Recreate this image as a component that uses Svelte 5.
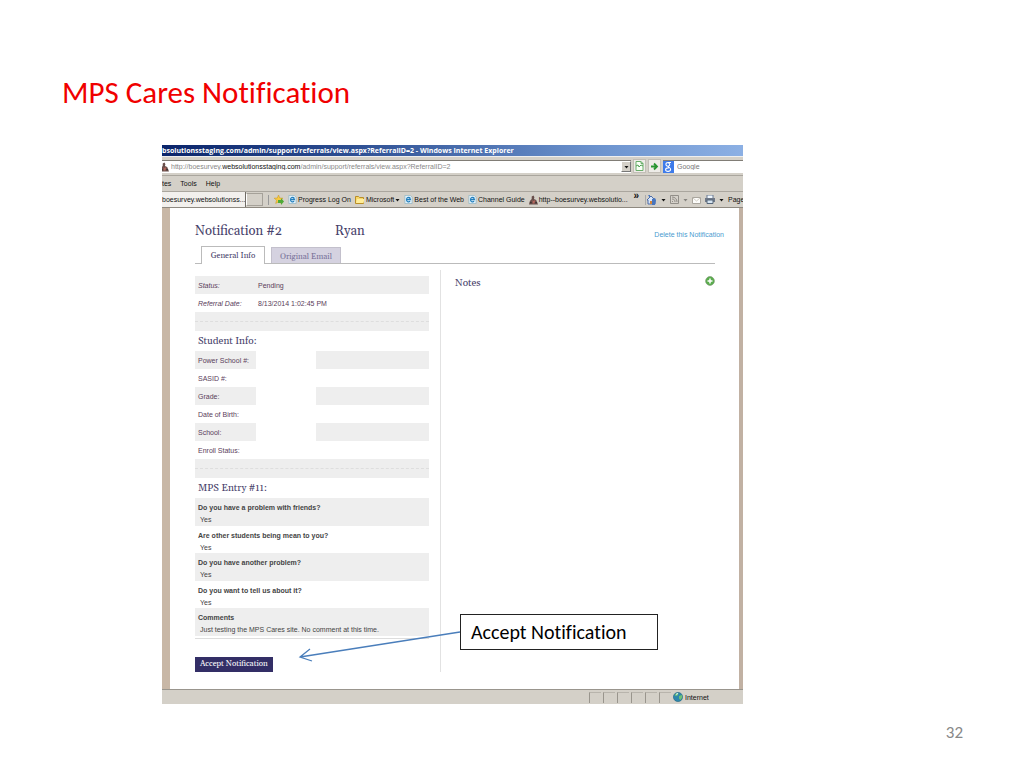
<script>
  const details = [
    ['Status:', 'Pending'],
    ['Referral Date:', '8/13/2014 1:02:45 PM']
  ];
  const student = ['Power School #:', 'SASID #:', 'Grade:', 'Date of Birth:', 'School:', 'Enroll Status:'];
  const answers = [
    ['Do you have a problem with friends?', 'Yes'],
    ['Are other students being mean to you?', 'Yes'],
    ['Do you have another problem?', 'Yes'],
    ['Do you want to tell us about it?', 'Yes'],
    ['Comments', 'Just testing the MPS Cares site. No comment at this time.']
  ];
  const panes = [1, 2, 3, 4, 5, 6];
</script>

{#snippet page()}
  <svg width="9" height="9" viewBox="0 0 10 10" aria-hidden="true"><path d="M1 .5h6l2 2v7H1z" fill="#e2f2fb" stroke="#86aebd" stroke-width=".7" /><path d="M7 3.1C5 1.8 2.8 3 2.8 5.2S5 8.4 6.8 7M3 5.2h4.2C7.2 3.9 6.2 3.3 5 3.3" fill="none" stroke="#247fbd" stroke-width="1.3" /></svg>
{/snippet}

{#snippet figure()}
  <svg width="9" height="10" viewBox="0 0 10 10" aria-hidden="true"><path d="M3 1l2-1 1 2-.5 2L8 5l2 5H0l1-4 2-2z" fill="#684e4a" /><path d="M4 5l1 1 2-1-1 4H4z" fill="#b5665d" /><path d="M1 8h2M7 8h2" stroke="#302828" /></svg>
{/snippet}

{#snippet caret()}
  <svg class="caret" width="5" height="4" viewBox="0 0 5 4" aria-hidden="true"><path d="M.5 1h4L2.5 3.4z" fill="#111" /></svg>
{/snippet}

<main>
  <h1>MPS Cares Notification</h1>
  <div class="stage">
    <div class="window">
      <div class="title">bsolutionsstaging.com/admin/support/referrals/view.aspx?ReferralID=2 - Windows Internet Explorer</div>
      <div class="address">
        <div class="url">
          {@render figure()}
          <span>http://boesurvey.<b>websolutionsstaging.com</b>/admin/support/referrals/view.aspx?ReferralID=2</span>
          <button class="drop" aria-label="Show addresses">{@render caret()}</button>
        </div>
        <button class="tool" aria-label="Compatibility view"><svg width="9" height="10" viewBox="0 0 9 10"><path d="M1 .5h5l2 2v7H1zM6 .5v2h2" fill="#f7fff4" stroke="#69ae6a" /><path d="M1 5l2-1 1 2 2-2 2 1" fill="none" stroke="#55a158" /></svg></button>
        <button class="tool" aria-label="Go"><svg width="9" height="9" viewBox="0 0 9 9"><path d="M1 4.5h5M4 1.5l3 3-3 3" fill="none" stroke="#299532" stroke-width="1.8" /></svg></button>
        <div class="search">
          <svg width="11" height="12" viewBox="0 0 11 12" aria-hidden="true"><path d="M0 0h11v12H0z" fill="#3e7bea" /><path d="M8 1.5H5.2c-3 0-3 3.7-.2 3.7 2.4 0 2.2-3.2.2-3.2M5.3 5.2c-.8 1 2.5 1.4 2.3 3.3-.2 2.5-5 2.4-5 .2 0-1.7 2-1.8 3.2-1.8" fill="none" stroke="#fff" stroke-width="1.1" /></svg>
          <input aria-label="Search" placeholder="Google" />
        </div>
      </div>
      <nav class="menu"><span>tes</span><span>Tools</span><span>Help</span></nav>
      <div class="links">
        <button class="page-tab">boesurvey.websolutionss...</button>
        <button class="new-tab" aria-label="New tab"></button>
        <div class="favorites">
          <svg width="10" height="10" viewBox="0 0 10 10" aria-hidden="true"><path d="M4.5 0l1.3 3 3.2.2-2.4 2 .8 3.3-2.9-1.7L1.7 8.5l.8-3.3-2.4-2L3.3 3z" fill="#f7ca40" stroke="#c8961d" stroke-width=".5" /><path d="M4 5h3V3l3 3.5L7 10V8H4z" fill="#4faa37" /></svg>
          <span class="fav">{@render page()}Progress Log On</span>
          <span class="fav"><svg width="10" height="9" viewBox="0 0 10 9" aria-hidden="true"><path d="M.5 1.5h3l1 1h4v6h-8z" fill="#f6d66a" stroke="#b98e27" /><path d="M1 8l1-4h7.5l-1 4z" fill="#ffed98" /></svg>Microsoft {@render caret()}</span>
          <span class="fav">{@render page()}Best of the Web</span>
          <span class="fav">{@render page()}Channel Guide</span>
          <span class="fav">{@render figure()}http--boesurvey.websolutio...</span>
        </div>
        <span class="more">»</span>
        <div class="commands">
          <svg width="10" height="10" viewBox="0 0 10 10" aria-hidden="true"><path d="M0 5l4-4 4 4v4H1V5z" fill="#d9e6fa" stroke="#4d6da8" /><path d="M1 0h2v3M5 4l3-1 1 2-1 5H5z" fill="#4875bd" /><path d="M3 6h2v3H3z" fill="#d58637" /></svg>
          {@render caret()}
          <svg width="9" height="9" viewBox="0 0 9 9" aria-hidden="true"><path d="M.5.5h8v8h-8z" fill="#d6d2cb" stroke="#928f89" /><path d="M2 4c2 0 3 1 3 3M2 2c3 0 5 2 5 5M2 6.5h1" fill="none" stroke="#908c86" /></svg>
          <span class="faint">{@render caret()}</span>
          <svg width="9" height="8" viewBox="0 0 9 8" aria-hidden="true"><path d="M.5 1.5h8v6h-8z" fill="#fcfcfa" stroke="#aaa69e" /><path d="M1 2l3.5 3L8 2" fill="none" stroke="#d3cec5" /></svg>
          <svg width="10" height="9" viewBox="0 0 10 9" aria-hidden="true"><path d="M2 0h6v4H2z" fill="#eff7ff" stroke="#6a7b92" /><path d="M0 3h10v4H0z" fill="#6f7887" /><path d="M2 5h6v3.5H2z" fill="#d7e6f4" stroke="#566679" /></svg>
          {@render caret()}
          <span>Page</span>
        </div>
      </div>

      <div class="sheet">
        <header>
          <h2>Notification #2</h2>
          <h2>Ryan</h2>
          <a href="#delete">Delete this Notification</a>
        </header>
        <div class="tabs">
          <button class="active">General Info</button>
          <button>Original Email</button>
        </div>
        <div class="columns">
          <section class="info">
            <table>
              <tbody>
                {#each details as [label, value]}
                  <tr><th class="em" scope="row">{label}</th><td>{value}</td></tr>
                {/each}
              </tbody>
            </table>
            <div class="rule"></div>
            <h3>Student Info:</h3>
            <table class="student">
              <tbody>
                {#each student as label}
                  <tr><th scope="row">{label}</th><td class="blank"></td><td></td></tr>
                {/each}
              </tbody>
            </table>
            <div class="rule"></div>
            <h3>MPS Entry #11:</h3>
            <dl>
              {#each answers as [question, answer]}
                <div><dt>{question}</dt><dd>{answer}</dd></div>
              {/each}
            </dl>
            <button class="accept">Accept Notification</button>
          </section>
          <section class="notes">
            <h3>Notes</h3>
            <button aria-label="Add note"><svg width="10" height="10" viewBox="0 0 10 10"><circle cx="5" cy="5" r="4.4" fill="#59ad4c" stroke="#7d9c75" stroke-width=".7" /><path d="M5 2.5v5M2.5 5h5" stroke="#fff" stroke-width="1.5" /></svg></button>
          </section>
        </div>
      </div>

      <footer>
        {#each panes as pane (pane)}<i></i>{/each}
        <span>
          <svg width="10" height="10" viewBox="0 0 10 10" aria-hidden="true"><circle cx="5" cy="5" r="4.6" fill="#2d87ad" stroke="#22647f" stroke-width=".6" /><path d="M1.5 3Q4 .3 5.5 1.4L4.8 3.2 3 4.2zM6 4l3-1 .3 2.5L7.3 8 6 6.5z" fill="#6fc175" /><path d="M3 2.3l2-.8" stroke="#e1faff" /></svg>
          Internet
        </span>
      </footer>
    </div>
    <svg class="arrow" width="164" height="36" viewBox="0 0 164 36" aria-hidden="true"><path d="M162 5L2 30M12 22L2 30l12 4" fill="none" stroke="#4a7ebb" stroke-width="1.3" /></svg>
    <div class="callout">Accept Notification</div>
  </div>
  <div class="number">32</div>
</main>

<style>
  :global(body) { margin: 0; background: #fff; }
  main { padding: 72px 61px 24px 62px; font-family: "Liberation Sans", Arial, sans-serif; font-size: 7px; color: #444; }
  h1, h2, h3 { margin: 0; font-weight: 400; }
  h1 { font: 31px/40px Carlito, Lato, sans-serif; font-variant-ligatures: none; color: #f00000; }
  button { font: inherit; color: inherit; margin: 0; padding: 0; border: 0; background: none; }
  svg { display: block; flex: none; }
  .stage { position: relative; margin: 33px 220px 0 100px; }
  .window { overflow: hidden; background: #d4d0c8; }
  .title, .address, .menu, .links, footer { font-family: "Liberation Sans", Arial, sans-serif; font-size: 7px; white-space: nowrap; color: #111; }
  .title { height: 11px; line-height: 11px; font-family: "Open Sans", sans-serif; font-weight: 700; color: #fff; background: linear-gradient(90deg, #0a246a 0%, #2a4b8f 30%, #6c93ce 75%, #8cb0e4 100%); }
  .address { display: flex; align-items: center; gap: 2px; height: 19px; border-top: 1px solid #eee; box-sizing: border-box; }
  .url { display: flex; flex: 1; align-items: center; gap: 2px; height: 12px; min-width: 0; background: #fff; border-top: 1px solid #817d76; color: #888; margin-left: -2px; }
  .url span { flex: 1; overflow: hidden; }
  .url b { color: #111; font-weight: 400; }
  .drop { display: grid; place-items: center; width: 10px; height: 11px; background: #d4d0c8; border: 1px solid #777; border-top-color: #fff; border-left-color: #fff; box-sizing: border-box; }
  .tool { display: grid; place-items: center; width: 13px; height: 14px; background: #eeece8; border: 1px solid #c2beb6; box-sizing: border-box; }
  .search { display: flex; width: 80px; height: 12px; background: #fff; border-top: 1px solid #817d76; }
  .search input { flex: 1; min-width: 0; border: 0; padding: 0 3px; background: none; font: inherit; }
  .search input::placeholder { color: #777; }
  .menu { display: flex; gap: 9px; height: 17px; line-height: 15px; border-top: 1px solid #aaa69e; border-bottom: 1px solid #aaa69e; box-sizing: border-box; }
  .links { display: flex; align-items: center; height: 16px; border-bottom: 1px solid #8e8980; box-sizing: border-box; }
  .page-tab { width: 84px; height: 15px; text-align: left; background: #f2f0ed; border-right: 1px solid #706c65; overflow: hidden; flex: none; }
  .new-tab { width: 17px; height: 13px; border: 1px solid #a5a199; border-left-color: #fff; box-sizing: border-box; flex: none; }
  .favorites { display: flex; align-items: center; gap: 4px; border-left: 1px solid #999; margin-left: 5px; padding-left: 5px; }
  .fav { display: flex; align-items: center; gap: 1px; }
  .more { flex: 1; text-align: center; font-size: 10px; line-height: 8px; align-self: start; font-weight: 700; }
  .commands { display: flex; align-items: center; gap: 4px; width: 98px; flex: none; border-left: 1px solid #aaa; padding-left: 1px; box-sizing: border-box; }
  .faint { opacity: .4; }
  .sheet { background: #fff; border-left: 8px solid #c8b7a6; border-right: 4px solid #c1b1a3; padding: 14px 15px 17px 25px; }
  header { display: flex; height: 18px; line-height: 18px; color: #48426b; }
  header h2 { font: 13px/18px Georgia, Gelasio, "Liberation Serif", serif; }
  header h2:first-child { width: 140px; }
  header a { margin-left: auto; padding-top: 4px; color: #4a9bcf; text-decoration: none; font-size: 7px; }
  .tabs { display: flex; align-items: end; gap: 6px; height: 23px; margin-right: 9px; padding: 0 6px; border-bottom: 1px solid #bbb; }
  .tabs button { width: 70px; height: 16px; background: #d5d2e0; border: 1px solid #c3c0cc; border-bottom: 0; color: #777199; font: 8px/18px Georgia, Gelasio, "Liberation Serif", serif; box-sizing: border-box; }
  .tabs .active { width: 64px; height: 18px; background: #fff; color: #48426b; border-color: #bbb; margin-bottom: -1px; }
  .columns { display: grid; grid-template-columns: 234px 1fr; gap: 11px; margin: 6px 9px 0 0; }
  .info { padding-top: 6px; }
  table { width: 100%; border-collapse: collapse; table-layout: fixed; color: #5a3d5a; }
  th, td { height: 18px; padding: 1px 3px 0; text-align: left; font-weight: 400; box-sizing: border-box; line-height: 10px; }
  th { width: 60px; white-space: nowrap; }
  .em { font-style: italic; }
  tr:nth-child(odd) > * { background: #eee; }
  .student th { width: 61px; }
  .student tr .blank { width: 60px; background: #fff; }
  .rule { height: 19px; background: #eee; display: flex; align-items: center; }
  .rule::after { content: ""; flex: 1; border-top: 1px dashed #dedede; }
  h3 { font: 10px/20px Georgia, Gelasio, "Liberation Serif", serif; color: #48426b; padding-left: 3px; }
  dl { margin: 0; padding-bottom: 2px; border-bottom: 1px solid #ddd; }
  dl div { padding: 4px 3px 0; height: 27px; box-sizing: border-box; line-height: 12px; }
  dl div:nth-child(odd) { height: 28px; background: #eee; }
  dt { font-weight: 700; }
  dd { margin: 0; padding-left: 2px; }
  .accept { display: block; margin-top: 18px; padding: 0 5px; height: 15px; background: #332e66; color: #fff; font: 8px/15px Georgia, Gelasio, "Liberation Serif", serif; }
  .notes { display: flex; justify-content: space-between; align-items: start; border-left: 1px solid #e2e2e2; padding: 3px 0 0 11px; }
  .notes button { margin-top: 3px; }
  footer { display: flex; justify-content: flex-end; align-items: center; height: 15px; border-top: 1px solid #99958d; box-sizing: border-box; }
  footer i { width: 12px; height: 11px; border-left: 1px solid #99958d; border-top: 1px solid #b8b4ac; margin-right: 2px; box-sizing: border-box; }
  footer span { display: flex; align-items: center; gap: 2px; width: 70px; }
  .arrow { position: absolute; left: 136px; top: 482px; }
  .callout { position: absolute; left: 298px; top: 469px; width: 198px; height: 36px; padding-left: 10px; box-sizing: border-box; background: #fff; border: 1px solid #222; color: #000; font: 20px/34px Carlito, Lato, sans-serif; font-variant-ligatures: none; }
  .number { margin-top: 20px; text-align: right; color: #888; font: 17px/18px Carlito, Lato, sans-serif; }
</style>
